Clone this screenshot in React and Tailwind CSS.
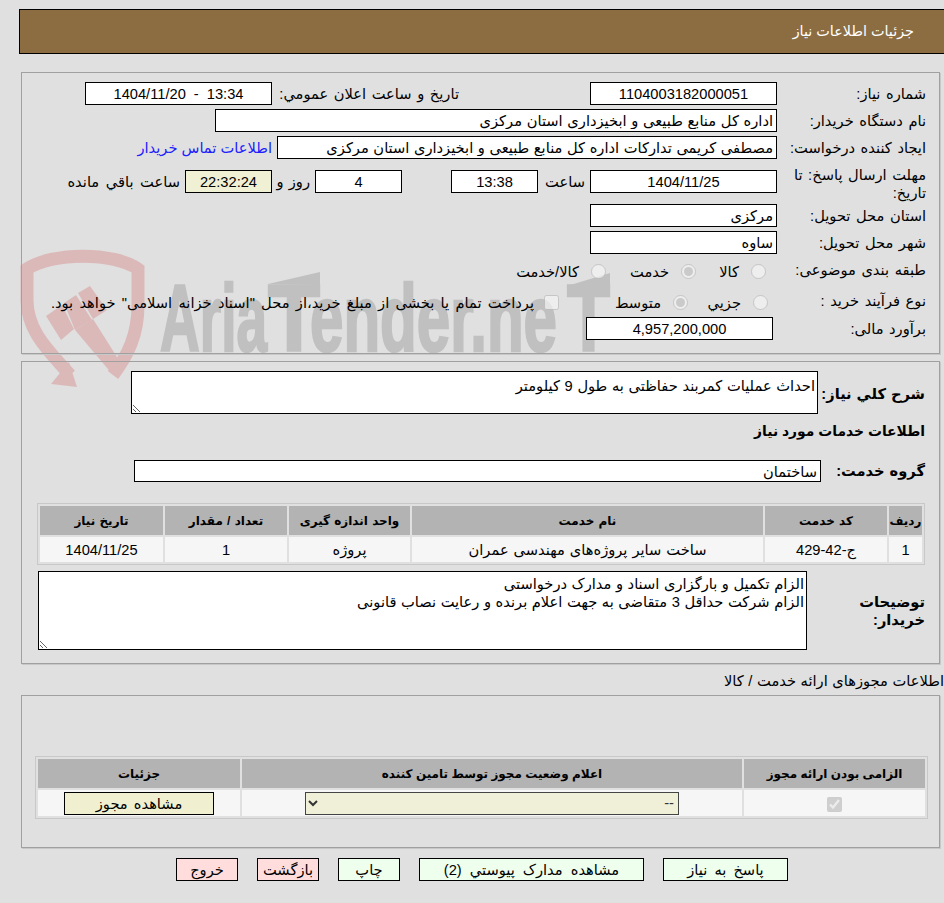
function Field({ value, className = "", center = true, dir, spacing = "[word-spacing:0.6px]" }) {
  return (
    <input
      readOnly
      dir={dir}
      value={value}
      className={`h-[23px] border border-black bg-white px-[3px] text-black ${spacing} ${center ? "text-center" : "text-right"} ${className}`}
    />
  );
}

function Row({ label, height = "h-[27px]", children }) {
  return (
    <div className={`flex items-start ${height}`}>
      <div className="w-[149px] shrink-0 pl-[12px] pt-[3px] leading-[18px] [word-spacing:1.5px]">{label}</div>
      {children}
    </div>
  );
}

function Option({ label, checked, width, type = "radio", spacing = "", gap = "gap-[12px]" }) {
  return (
    <label className={`flex items-center ${gap} ${width}`}>
      <input type={type} disabled defaultChecked={checked} className="m-0 h-[15px] w-[15px]" />
      <span className={`whitespace-nowrap ${spacing}`}>{label}</span>
    </label>
  );
}

function Watermark() {
  const textProps = {
    y: 111,
    direction: "ltr",
    textAnchor: "start",
    fontFamily: "'Liberation Sans', sans-serif",
    fontWeight: 700,
    fontSize: 94,
    fill: "#c0c0c0",
    stroke: "#c0c0c0",
    strokeWidth: 2.5,
    lengthAdjust: "spacingAndGlyphs",
  };
  return (
    <svg
      className="pointer-events-none absolute left-[10px] top-[240px] z-0"
      width="620"
      height="160"
      viewBox="0 0 620 160"
    >
      <g fill="#dcb9b9">
        <path
          d="M60 135 C40 112 17 92 17 60 L17 29 C42 12 104 12 128 29 L128 65 C128 95 118 115 103 135"
          fill="none"
          stroke="#dcb9b9"
          strokeWidth="13"
        />
        <polygon points="41,144 67,147 59,122" />
        <polygon points="36,76 52,65 64,89 51,100" />
        <polygon points="68,53 80,46 97,70 83,79" />
        <polygon points="54,63 66,55 82,80 65,90" />
        <polygon points="65,90 83,79 112,125 103,135" />
      </g>
      <text {...textProps} x="150" textLength="107">Aria</text>
      <text {...textProps} x="258" textLength="52">T</text>
      <text {...textProps} x="300" textLength="247">ender.ne</text>
      <text {...textProps} x="557" textLength="43">T</text>
      <polygon points="258,44 310,32 310,45" fill="#c0c0c0" />
      <polygon points="557,46 600,33 600,50" fill="#c0c0c0" />
    </svg>
  );
}

export default function App() {
  return (
    <div
      dir="rtl"
      className="relative min-h-[903px] overflow-hidden bg-[#e0e0e0] pt-[9px] font-['Liberation_Sans','DejaVu_Sans',sans-serif] text-[14.67px] text-black"
    >
      <Watermark />
      <div className="relative z-10">
        <div className="ml-[19px] flex h-[45px] items-center border-y border-l border-black bg-[#8c6d42] pr-[30px] text-[14.4px] text-white">
          جزئیات اطلاعات نیاز
        </div>

        <div className="ml-[21px] mr-[4px] mt-[18px] h-[282px] border border-[#a0a0a0] pr-[13px] pt-[9px] shadow-[1px_1px_0_#c8c8c8] [word-spacing:1.2px]">
          <Row label="شماره نیاز:">
            <Field value="1104003182000051" className="w-[187px]" />
            <div className="w-[318px] pr-[131px] pt-[3px] leading-[18px] whitespace-nowrap [word-spacing:1.5px]">تاریخ و ساعت اعلان عمومي:</div>
            <Field value="1404/11/20 - 13:34" dir="ltr" spacing="[word-spacing:4px]" className="w-[187px]" />
          </Row>
          <Row label="نام دستگاه خریدار:">
            <Field value="اداره کل منابع طبیعی و ابخیزداری استان مرکزی" center={false} className="w-[562px]" />
          </Row>
          <Row label="ایجاد کننده درخواست:">
            <Field value="مصطفی کریمی تدارکات اداره کل منابع طبیعی و ابخیزداری استان مرکزی" center={false} spacing="[word-spacing:0.5px]" className="w-[500px]" />
            <a className="pr-[5px] pt-[3px] leading-[18px] whitespace-nowrap text-[#2020ff] [word-spacing:0]">اطلاعات تماس خریدار</a>
          </Row>
          <Row label="مهلت ارسال پاسخ: تا تاریخ:" height="h-[41px]">
            <div className="flex pt-[7px]">
              <Field value="1404/11/25" className="w-[187px]" />
              <span className="w-[52px] pr-[5px] pt-[3px] leading-[18px] whitespace-nowrap">ساعت</span>
              <Field value="13:38" className="w-[87px]" />
              <span className="w-[49px]" />
              <Field value="4" className="w-[87px]" />
              <span className="w-[43px] pr-[5px] pt-[3px] leading-[18px] whitespace-nowrap">روز و</span>
              <Field value="22:32:24" className="w-[87px] !bg-[#f0f0d4]" />
              <span className="pr-[5px] pt-[3px] leading-[18px] whitespace-nowrap [word-spacing:2.5px]">ساعت باقي مانده</span>
            </div>
          </Row>
          <Row label="استان محل تحویل:">
            <Field value="مرکزی" center={false} className="w-[187px]" />
          </Row>
          <Row label="شهر محل تحویل:">
            <Field value="ساوه" center={false} className="w-[187px]" />
          </Row>
          <Row label="طبقه بندی موضوعی:" height="h-[31px]">
            <div className="flex h-[27px] items-center pr-[11px]">
              <Option label="کالا" width="w-[70px]" />
              <Option label="خدمت" checked width="w-[90px]" />
              <Option label="کالا/خدمت" gap="gap-[12px]" />
            </div>
          </Row>
          <Row label="نوع فرآیند خرید :" height="h-[28px]">
            <div className="flex h-[27px] items-center pr-[9px]">
              <Option label="جزیي" width="w-[80px]" />
              <Option label="متوسط" checked width="w-[129px]" />
              <Option
                label='پرداخت تمام یا بخشی از مبلغ خرید،از محل "اسناد خزانه اسلامی" خواهد بود.'
                type="checkbox"
                gap="gap-[10px]"
                spacing="[word-spacing:2.2px]"
              />
            </div>
          </Row>
          <Row label="برآورد مالی:">
            <Field value="4,957,200,000" className="mr-[4px] w-[187px]" />
          </Row>
        </div>

        <div className="ml-[21px] mr-[4px] mt-[7px] h-[303px] border border-[#a0a0a0] pt-[9px] shadow-[1px_1px_0_#c8c8c8] [word-spacing:0.9px]">
          <div className="flex items-start pr-[14px]">
            <div className="w-[107px] shrink-0 pt-[12px] font-bold whitespace-nowrap">شرح کلي نیاز:</div>
            <textarea
              readOnly
              defaultValue="احداث عملیات کمربند حفاظتی به طول 9 کیلومتر"
              className="block h-[43px] w-[687px] border border-black bg-white px-[2px] pt-[3px] text-right [word-spacing:0.6px]"
            />
          </div>
          <div className="mt-[7px] pr-[14px] text-[13.9px] font-bold leading-[20px] [word-spacing:0]">اطلاعات خدمات مورد نیاز</div>
          <div className="mt-[19px] flex items-center pr-[14px]">
            <div className="w-[104px] shrink-0 font-bold">گروه خدمت:</div>
            <Field value="ساختمان" center={false} className="!h-[22px] w-[687px]" />
          </div>

          <table className="mr-[14px] mt-[21px] w-[888px] table-fixed border-separate border-spacing-[2px] border border-[#c8c8c8] text-center">
            <thead>
              <tr className="h-[29px] bg-[#b3b3b3] text-[12px] font-bold">
                <th className="w-[33px]">ردیف</th>
                <th className="w-[122px]">کد خدمت</th>
                <th>نام خدمت</th>
                <th className="w-[121px]">واحد اندازه گیری</th>
                <th className="w-[122px]">تعداد / مقدار</th>
                <th className="w-[123px]">تاریخ نیاز</th>
              </tr>
            </thead>
            <tbody>
              <tr className="h-[25px] bg-[#f6f6f6]">
                <td>1</td>
                <td>ج-42-429</td>
                <td>ساخت سایر پروژه‌های مهندسی عمران</td>
                <td>پروژه</td>
                <td>1</td>
                <td>1404/11/25</td>
              </tr>
            </tbody>
          </table>

          <div className="mt-[6px] flex items-center pr-[14px]">
            <div className="w-[118px] shrink-0 font-bold leading-[18px]">
              توضیحات
              <br />
              خریدار:
            </div>
            <textarea
              readOnly
              defaultValue={"الزام تکمیل و بارگزاری اسناد و مدارک درخواستی\nالزام شرکت حداقل 3 متقاضی به جهت اعلام برنده و رعایت نصاب قانونی"}
              className="block h-[79px] w-[769px] border border-black bg-white px-[2px] pt-[3px] text-right leading-[18px] [word-spacing:0.5px]"
            />
          </div>
        </div>

        <div className="mt-[7px] h-[24px] leading-[20px] whitespace-nowrap [word-spacing:0.5px]">اطلاعات مجوزهای ارائه خدمت / کالا</div>

        <div className="ml-[21px] mr-[4px] h-[153px] border border-[#a0a0a0] pt-[60px] shadow-[1px_1px_0_#c8c8c8]">
          <table className="mr-[11px] w-[893px] table-fixed border-separate border-spacing-[2px] border border-[#c8c8c8] text-center">
            <thead>
              <tr className="h-[29px] bg-[#b3b3b3] text-[12px] font-bold">
                <th className="w-[181px]">الزامی بودن ارائه مجوز</th>
                <th>اعلام وضعیت مجوز توسط تامین کننده</th>
                <th className="w-[202px]">جزئیات</th>
              </tr>
            </thead>
            <tbody>
              <tr className="h-[26px] bg-[#f6f6f6]">
                <td>
                  <input type="checkbox" disabled defaultChecked className="m-0 h-[15px] w-[15px] align-middle" />
                </td>
                <td>
                  <select disabled className="mx-auto block h-[23px] w-[374px] border border-[#444] bg-[#f0f0d8] text-[#333]">
                    <option>--</option>
                  </select>
                </td>
                <td>
                  <button className="h-[23px] w-[150px] border border-black bg-[#f0f0d0] [word-spacing:2px]">مشاهده مجوز</button>
                </td>
              </tr>
            </tbody>
          </table>
        </div>

        <div className="mt-[10px] flex gap-[19px] pr-[156px]">
          <button className="h-[23px] w-[125px] border border-black bg-[#eeffee] [word-spacing:3px]">پاسخ به نیاز</button>
          <button className="h-[23px] w-[225px] border border-black bg-[#eeffee] [word-spacing:4px]">مشاهده مدارک پیوستي (2)</button>
          <button className="h-[23px] w-[62px] border border-black bg-[#eeffee]">چاپ</button>
          <button className="h-[23px] w-[62px] border border-black bg-[#ffdddd]">بازگشت</button>
          <button className="h-[23px] w-[62px] border border-black bg-[#ffdddd]">خروج</button>
        </div>
      </div>
    </div>
  );
}
